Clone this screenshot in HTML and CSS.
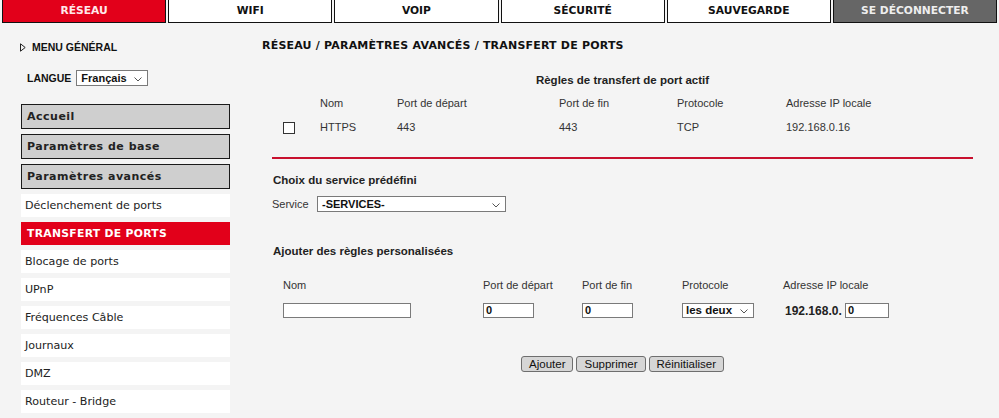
FILE: index.html
```html
<!DOCTYPE html>
<html lang="fr">
<head>
<meta charset="utf-8">
<title>Transfert de ports</title>
<link rel="stylesheet" href="styles.css">
</head>
<body>
<nav class="tabs">
  <a class="tab tab-active">RÉSEAU</a>
  <a class="tab">WIFI</a>
  <a class="tab">VOIP</a>
  <a class="tab">SÉCURITÉ</a>
  <a class="tab">SAUVEGARDE</a>
  <a class="tab tab-logout">SE DÉCONNECTER</a>
</nav>
<div class="main">
  <aside class="sidebar">
    <div class="menu-title">
      <svg class="tri" width="6" height="9" viewBox="0 0 6 9"><path d="M0.5 0.8 L5.2 4.5 L0.5 8.2 Z" fill="none" stroke="#222" stroke-width="1"/></svg>
      <span>MENU GÉNÉRAL</span>
    </div>
    <div class="lang">
      <span class="lang-label">LANGUE</span>
      <span class="select sel-lang">Français
        <svg class="chev" width="8" height="5" viewBox="0 0 8 5"><path d="M0.5 0.5 L4 4 L7.5 0.5" fill="none" stroke="#555" stroke-width="1"/></svg>
      </span>
    </div>
    <ul class="nav">
      <li class="nav-group">Accueil</li>
      <li class="nav-group">Paramètres de base</li>
      <li class="nav-group">Paramètres avancés</li>
      <li class="nav-item">Déclenchement de ports</li>
      <li class="nav-item nav-current">TRANSFERT DE PORTS</li>
      <li class="nav-item">Blocage de ports</li>
      <li class="nav-item">UPnP</li>
      <li class="nav-item">Fréquences Câble</li>
      <li class="nav-item">Journaux</li>
      <li class="nav-item">DMZ</li>
      <li class="nav-item">Routeur - Bridge</li>
    </ul>
  </aside>
  <section class="content">
    <h1 class="crumb">RÉSEAU / PARAMÈTRES AVANCÉS / TRANSFERT DE PORTS</h1>
    <div class="panel">
      <h2 class="rules-title">Règles de transfert de port actif</h2>
      <div class="rules-grid">
        <span></span><span>Nom</span><span>Port de départ</span><span>Port de fin</span><span>Protocole</span><span>Adresse IP locale</span>
        <span class="cb-cell"><span class="checkbox"></span></span><span>HTTPS</span><span>443</span><span>443</span><span>TCP</span><span>192.168.0.16</span>
      </div>
      <hr class="divider">
      <h3 class="sec-title">Choix du service prédéfini</h3>
      <div class="service-row">
        <span class="lbl">Service</span>
        <span class="select sel-service">-SERVICES-
          <svg class="chev" width="8" height="5" viewBox="0 0 8 5"><path d="M0.5 0.5 L4 4 L7.5 0.5" fill="none" stroke="#555" stroke-width="1"/></svg>
        </span>
      </div>
      <h3 class="sec-title add-title">Ajouter des règles personalisées</h3>
      <div class="add-grid">
        <span>Nom</span><span>Port de départ</span><span>Port de fin</span><span>Protocole</span><span>Adresse IP locale</span>
        <span><span class="field f-name"></span></span>
        <span><span class="field f-port">0</span></span>
        <span><span class="field f-port">0</span></span>
        <span><span class="select sel-proto">les deux
          <svg class="chev" width="8" height="5" viewBox="0 0 8 5"><path d="M0.5 0.5 L4 4 L7.5 0.5" fill="none" stroke="#555" stroke-width="1"/></svg>
        </span></span>
        <span class="ip-cell"><span class="ip-prefix">192.168.0.</span><span class="field f-ip">0</span></span>
      </div>
      <div class="buttons">
        <button class="btn">Ajouter</button>
        <button class="btn">Supprimer</button>
        <button class="btn">Réinitialiser</button>
      </div>
    </div>
  </section>
</div>
</body>
</html>
```
FILE: styles.css
```css
html, body {
  margin: 0;
  padding: 0;
  background: #f4f4f4;
  color: #222;
  font-family: "Liberation Sans", Arial, sans-serif;
  font-size: 11px;
}

.tabs {
  display: flex;
  gap: 2px;
  padding: 0 2px 0 2px;
  height: 23px;
}
.tab {
  flex: 1;
  box-sizing: border-box;
  height: 23px;
  line-height: 22px;
  text-align: center;
  background: #fff;
  border: 1px solid #111;
  border-top: none;
  font-family: "DejaVu Sans", Verdana, sans-serif;
  font-weight: bold;
  font-size: 10.7px;
  color: #111;
}
.tab-active {
  background: #e2001a;
  color: #ffe8ea;
}
.tab-logout {
  background: #666;
  color: #eee;
}

.main {
  display: flex;
}
.sidebar {
  width: 262px;
  box-sizing: border-box;
  padding-left: 21px;
  flex: none;
}
.menu-title {
  display: flex;
  align-items: center;
  margin-left: -1px;
  margin-top: 16px;
  height: 16px;
  font-weight: bold;
  font-size: 10.5px;
  color: #111;
}
.tri { margin-right: 6px; }

.lang {
  display: flex;
  align-items: center;
  margin-top: 14px;
  margin-left: 6px;
  height: 17px;
}
.lang-label {
  font-weight: bold;
  font-size: 10.5px;
  color: #111;
  margin-right: 5px;
}
.select {
  position: relative;
  display: inline-block;
  box-sizing: border-box;
  height: 16px;
  line-height: 14px;
  background: #fff;
  border: 1px solid #7a7a7a;
  font-weight: bold;
  font-size: 11px;
  color: #111;
  padding-left: 4px;
}
.chev {
  position: absolute;
  right: 5px;
  top: 6px;
}
.sel-lang { width: 72px; }

.nav {
  list-style: none;
  margin: 18px 0 0 0;
  padding: 0;
  width: 209px;
  display: flex;
  flex-direction: column;
  gap: 5px;
}
.nav-group {
  box-sizing: border-box;
  height: 25px;
  line-height: 23px;
  background: #cfcfcf;
  border: 1px solid #1a1a1a;
  padding-left: 5px;
  font-family: "DejaVu Sans", Verdana, sans-serif;
  font-weight: bold;
  font-size: 11px;
  letter-spacing: 0.5px;
  color: #222;
}
.nav-group + .nav-group { margin-top: 0; }
.nav-item {
  height: 23px;
  line-height: 24px;
  background: #fff;
  padding-left: 4px;
  font-family: "DejaVu Sans", Verdana, sans-serif;
  font-size: 11.1px;
  color: #222;
}
.nav-current {
  background: #e2001a;
  color: #fff;
  font-weight: bold;
  font-size: 10.8px;
  letter-spacing: 0.3px;
  padding-left: 6px;
}

.content {
  flex: none;
  width: 737px;
}
.crumb {
  margin: 15px 0 0 0;
  height: 16px;
  line-height: 16px;
  font-family: "DejaVu Sans", Verdana, sans-serif;
  font-size: 11px;
  font-weight: bold;
  letter-spacing: 0.2px;
  color: #111;
}
.panel {
  margin-left: 10px;
  width: 701px;
}
.rules-title {
  margin: 18px 0 0 0;
  height: 16px;
  line-height: 16px;
  text-align: center;
  font-size: 11.5px;
  font-weight: bold;
  color: #222;
}
.rules-grid {
  margin-top: 3px;
  padding-left: 12px;
  display: grid;
  grid-template-columns: 36px 77px 162px 118px 109px 1fr;
  grid-auto-rows: 24px;
  align-items: center;
  color: #333;
}
.cb-cell { display: flex; align-items: center; }
.checkbox {
  display: inline-block;
  box-sizing: border-box;
  width: 12px;
  height: 12px;
  background: #fff;
  border: 1px solid #333;
  margin-top: 1px;
  margin-left: -1px;
}
.divider {
  margin: 18px 0 0 0;
  border: none;
  height: 2px;
  background: #c8102e;
}
.sec-title {
  margin: 13px 0 0 1px;
  height: 16px;
  line-height: 16px;
  font-size: 11.5px;
  font-weight: bold;
  color: #222;
}
.service-row {
  margin-top: 8px;
  display: flex;
  align-items: center;
  height: 16px;
}
.lbl {
  color: #333;
  width: 45px;
}
.sel-service {
  width: 189px;
}
.add-title {
  margin-top: 31px;
}
.add-grid {
  margin-top: 18px;
  padding-left: 11px;
  display: grid;
  grid-template-columns: 200px 99px 100px 101px 1fr;
  grid-template-rows: 16px 15px;
  row-gap: 10px;
  align-items: center;
  color: #333;
}
.field {
  display: inline-block;
  box-sizing: border-box;
  height: 15px;
  line-height: 13px;
  background: #fff;
  border: 1px solid #7a7a7a;
  font-weight: bold;
  font-size: 11px;
  color: #111;
  padding-left: 2px;
  vertical-align: top;
}
.f-name { width: 128px; }
.f-port { width: 51px; }
.f-ip { width: 44px; }
.sel-proto {
  width: 72px;
  height: 15px;
  line-height: 13px;
  font-size: 11.5px;
  padding-left: 3px;
}
.sel-proto .chev { top: 5px; }
.ip-cell {
  display: flex;
  align-items: center;
  padding-left: 2px;
}
.ip-prefix {
  font-weight: bold;
  font-size: 12px;
  color: #222;
  width: 60px;
}
.buttons {
  margin-top: 38px;
  display: flex;
  justify-content: center;
  gap: 3px;
}
.btn {
  box-sizing: border-box;
  height: 16px;
  padding: 0 7px;
  background: #d6d6d6;
  border: 1px solid #6e6e6e;
  border-radius: 3px;
  font-family: "Liberation Sans", Arial, sans-serif;
  font-size: 11.5px;
  line-height: 14px;
  color: #111;
}
```
